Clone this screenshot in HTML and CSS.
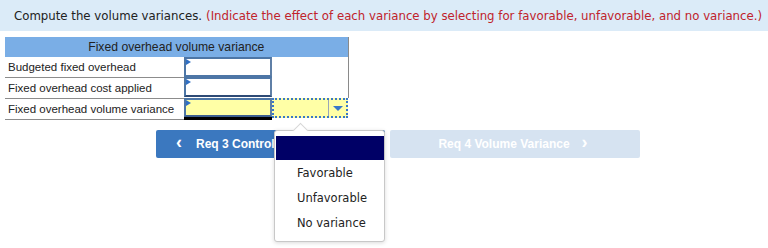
FILE: index.html
```html
<!DOCTYPE html>
<html>
<head>
<meta charset="utf-8">
<link rel="stylesheet" href="styles.css">
</head>
<body>
<div class="page">
<div class="banner">Compute the volume variances. <span class="hint">(Indicate the effect of each variance by selecting for favorable, unfavorable, and no variance.)</span></div>
<table class="grid">
  <colgroup><col class="c1"><col class="c2"><col class="c3"></colgroup>
  <tr class="head"><th colspan="3">Fixed overhead volume variance</th></tr>
  <tr class="r1"><td class="lbl">Budgeted fixed overhead</td><td class="in"><div class="box"><span class="tri"></span></div></td><td class="blank"></td></tr>
  <tr class="r2"><td class="lbl">Fixed overhead cost applied</td><td class="in"><div class="box b2"><span class="tri"></span></div></td><td class="blank"></td></tr>
  <tr class="r3"><td class="lbl">Fixed overhead volume variance</td><td class="in"><div class="box total"><span class="tri"></span></div></td><td class="sel"><div class="select"><span class="val"></span><span class="arrow"></span></div></td></tr>
</table>
<div class="nav">
  <button class="btn prev"><span class="chev">&lsaquo;</span>Req 3 Control</button>
  <button class="btn next">Req 4 Volume Variance<span class="chev r">&rsaquo;</span></button>
</div>
<div class="popup">
  <div class="caret"></div>
  <div class="opt active"></div>
  <div class="opt">Favorable</div>
  <div class="opt">Unfavorable</div>
  <div class="opt">No variance</div>
</div>
</div>
</body>
</html>
```
FILE: styles.css
```css
html, body {
  margin: 0;
  height: 248px;
}
body {
  font-family: "DejaVu Sans", Verdana, sans-serif;
  background: #fff;
}
.page {
  position: relative;
  height: 248px;
}
.banner {
  background: #dbebf8;
  height: 31px;
  display: flex;
  align-items: center;
  padding-left: 14px;
  font-size: 11.75px;
  color: #222;
  white-space: nowrap;
}
.banner .hint {
  color: #c0232c;
  margin-left: 4px;
}
.grid {
  margin: 6px 0 0 5px;
  border-collapse: collapse;
  table-layout: fixed;
  width: 343px;
  font-family: "Liberation Sans", Arial, sans-serif;
  font-size: 11.5px;
  color: #222;
}
.c1 { width: 179px; }
.c2 { width: 88px; }
.c3 { width: 76px; }
.grid th {
  background: #7aaee6;
  height: 20px;
  padding: 0;
  font-weight: normal;
  font-size: 12.2px;
  text-align: center;
  border-right: 1px solid #8a8a8a;
}
.grid td { padding: 0; }
.r1 td { height: 19px; }
.r2 td, .r3 td { height: 20px; }
.lbl {
  padding-left: 3px !important;
  border-bottom: 1px solid #8c8c8c;
  white-space: nowrap;
  overflow: hidden;
}
.in { vertical-align: top; }
.box {
  position: relative;
  height: 16px;
  border: 2px solid #4d76a6;
  border-right-color: #5f7fa6;
  background: #fff;
}
.box.b2 { border-bottom: 2px solid #2d4a75; }
.box.total {
  background: #ffffa6;
  height: 15px;
  border-bottom: 2px solid #3d5f8f;
  box-shadow: 0 3px 0 #000;
}
.tri {
  position: absolute;
  left: 0;
  top: 0;
  width: 0;
  height: 0;
  border-top: 3px solid transparent;
  border-bottom: 3px solid transparent;
  border-left: 5px solid #2f6fc4;
}
.blank { border-right: 1px solid #8a8a8a; }
.sel { vertical-align: top; }
.select {
  display: flex;
  height: 16px;
  border: 2px dotted #3a78c8;
  background: #ffffa6;
}
.select .val { flex: 1; border-right: 1px solid #9aa6b8; }
.select .arrow {
  width: 17px;
  position: relative;
}
.select .arrow::after {
  content: "";
  position: absolute;
  left: 4px;
  top: 6px;
  border-left: 5px solid transparent;
  border-right: 5px solid transparent;
  border-top: 5px solid #3a78c8;
}
.nav {
  display: flex;
  margin: 10px 0 0 156px;
  gap: 5px;
}
.btn {
  height: 28px;
  border: none;
  border-radius: 2px;
  font-family: "Liberation Sans", Arial, sans-serif;
  font-weight: bold;
  font-size: 12px;
  color: #fff;
  padding: 0;
  display: flex;
  align-items: center;
}
.btn.prev {
  background: #3b78bf;
  width: 229px;
  padding-left: 20px;
  justify-content: flex-start;
}
.btn.next {
  background: #d6e3f1;
  width: 250px;
  justify-content: center;
  padding-left: 0;
  padding-right: 4px;
}
.chev { font-size: 18px; font-weight: bold; margin-right: 14px; line-height: 1; position: relative; top: -2px; }
.chev.r { margin-right: 0; margin-left: 12px; }
.popup {
  position: absolute;
  left: 274px;
  top: 130px;
  width: 111px;
  height: 112px;
  background: #fff;
  border: 1px solid #c8c8c8;
  border-radius: 3px;
  box-shadow: 0 1px 4px rgba(0,0,0,0.15);
  font-family: "DejaVu Sans", Verdana, sans-serif;
  font-size: 11.5px;
  color: #222;
  padding-top: 5px;
  box-sizing: border-box;
}
.caret {
  position: absolute;
  left: 20px;
  top: -6px;
  width: 10px;
  height: 10px;
  background: #fff;
  border-left: 1px solid #d6d6d6;
  border-top: 1px solid #d6d6d6;
  transform: rotate(45deg);
}
.opt {
  height: 25px;
  line-height: 25px;
  padding-left: 22px;
  position: relative;
}
.opt.active {
  background: #000066;
  margin: 0 0 0 1px;
  height: 24px;
  margin-bottom: 1px;
}
```
